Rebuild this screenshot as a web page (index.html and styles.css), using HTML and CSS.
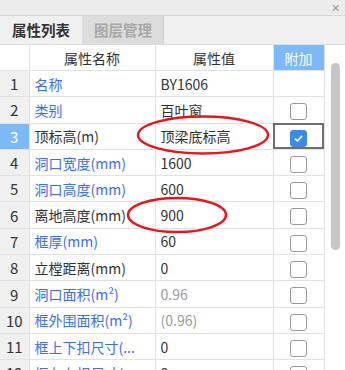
FILE: index.html
```html
<!DOCTYPE html>
<html lang="zh-CN">
<head>
    <meta charset="UTF-8">
    <title>属性列表</title>
    <link rel="stylesheet" href="styles.css">
</head>
<body>
    <div class="panel">
        <div class="titlebar"><span class="close">&#x2715;</span></div>
        <div class="tabs">
            <div class="tab active">属性列表</div>
            <div class="tab">图层管理</div>
        </div>

        <div class="grid-wrap">
            <table class="grid">
                <colgroup>
                    <col class="c-no"><col class="c-name"><col class="c-val"><col class="c-add">
                </colgroup>
                <thead>
                    <tr><th></th><th>属性名称</th><th>属性值</th><th class="add-head">附加</th></tr>
                </thead>
                <tbody>
                    <tr><td class="no">1</td><td class="name blue">名称</td><td>BY1606</td><td></td></tr>
                    <tr><td class="no">2</td><td class="name blue">类别</td><td>百叶窗</td><td><span class="box"></span></td></tr>
                    <tr class="sel"><td class="no">3</td><td class="name">顶标高(m)</td><td>顶梁底标高</td><td class="cur"><span class="box on"><svg viewBox="0 0 16 16" width="13" height="13"><path d="M3.5 8.2 L6.6 11 L12.5 4.8" fill="none" stroke="#fff" stroke-width="2"/></svg></span></td></tr>
                    <tr><td class="no">4</td><td class="name blue">洞口宽度(mm)</td><td>1600</td><td><span class="box"></span></td></tr>
                    <tr><td class="no">5</td><td class="name blue">洞口高度(mm)</td><td>600</td><td><span class="box"></span></td></tr>
                    <tr><td class="no">6</td><td class="name">离地高度(mm)</td><td>900</td><td><span class="box"></span></td></tr>
                    <tr><td class="no">7</td><td class="name blue">框厚(mm)</td><td>60</td><td><span class="box"></span></td></tr>
                    <tr><td class="no">8</td><td class="name">立樘距离(mm)</td><td>0</td><td><span class="box"></span></td></tr>
                    <tr><td class="no">9</td><td class="name blue">洞口面积(m²)</td><td class="muted">0.96</td><td><span class="box"></span></td></tr>
                    <tr><td class="no">10</td><td class="name blue">框外围面积(m²)</td><td class="muted">(0.96)</td><td><span class="box"></span></td></tr>
                    <tr><td class="no">11</td><td class="name blue">框上下扣尺寸(...</td><td>0</td><td><span class="box"></span></td></tr>
                    <tr><td class="no">12</td><td class="name blue">框左右扣尺寸(...</td><td>0</td><td><span class="box"></span></td></tr>
                </tbody>
            </table>
            <div class="scroll"><div class="thumb"></div></div>

            <svg class="marks" width="345" height="330" viewBox="0 0 345 330">
                <ellipse cx="203" cy="90" rx="65" ry="18.5" fill="none" stroke="#e8161b" stroke-width="2.4"/>
                <ellipse cx="177" cy="170" rx="49" ry="17" fill="none" stroke="#e8161b" stroke-width="2.4"/>
            </svg>
        </div>
    </div>
</body>
</html>
```

FILE: styles.css
```css
body {
    margin: 0;
    background: #fff;
    font-family: "Noto Sans CJK SC", "Noto Sans", sans-serif;
}

.panel {
    width: 345px;
    height: 370px;
    overflow: hidden;
    background: #fff;
}

.titlebar {
    height: 15px;
    background: #ececec;
    border-bottom: 1px solid #d6d6d6;
    position: relative;
}

.close {
    position: absolute;
    right: 5px;
    top: -1px;
    font-size: 11px;
    color: #9a9a9a;
    line-height: 16px;
}

.tabs {
    display: flex;
    height: 28px;
    background: #f0f0f0;
    border-bottom: 1px solid #dcdcdc;
}

.tab {
    width: 80px;
    line-height: 28px;
    text-align: center;
    font-size: 14.5px;
    font-weight: bold;
    color: #a8a8a8;
    background: #dcdcdc;
    border-right: 1px solid #d0d0d0;
}

.tab.active {
    width: 82px;
    color: #333;
    background: #f0f0f0;
    border-right: 1px solid #dcdcdc;
}

.grid-wrap {
    position: relative;
    display: flex;
}

.grid {
    border-collapse: collapse;
    table-layout: fixed;
    width: 324px;
    font-size: 14px;
    color: #333;
}

.c-no { width: 29px; }
.c-name { width: 126px; }
.c-val { width: 118px; }
.c-add { width: 51px; }

.grid th {
    height: 25px;
    padding: 0;
    font-weight: normal;
    border-right: 1px solid #e2e2e2;
    border-bottom: 1px solid #e2e2e2;
    text-align: center;
}

.grid th.add-head {
    background: #7db8f7;
    color: #fff;
    border-right: 1px solid #e2e2e2;
}

.grid td {
    height: 25.3px;
    padding: 0 0 0 5px;
    border-right: 1px solid #e2e2e2;
    border-bottom: 1px solid #e2e2e2;
    white-space: nowrap;
    overflow: hidden;
}

.grid td.no {
    padding: 0;
    text-align: center;
    font-size: 15px;
    background: #f0f0f0;
    color: #333;
}

.grid td:last-child {
    padding: 0;
    text-align: center;
}

.sel td.no {
    background: #7db8f7;
    color: #fff;
}

.grid td.cur {
    outline: 2px solid #6e6e6e;
    outline-offset: -2px;
}

.blue { color: #3d6cf5; }
.muted { color: #9a9a9a; }

.box {
    display: inline-block;
    width: 15px;
    height: 15px;
    border: 1px solid #9a9a9a;
    border-radius: 3px;
    vertical-align: middle;
    box-sizing: content-box;
}

.box.on {
    background: #3a8ae8;
    border-color: #3a8ae8;
    display: inline-flex;
    align-items: center;
    justify-content: center;
}

.scroll {
    width: 21px;
    position: relative;
}

.thumb {
    position: absolute;
    left: 6px;
    top: 18px;
    width: 9px;
    height: 187px;
    border-radius: 5px;
    background: #c6c6c6;
}

.marks {
    position: absolute;
    left: 0;
    top: 0;
    pointer-events: none;
}
```
